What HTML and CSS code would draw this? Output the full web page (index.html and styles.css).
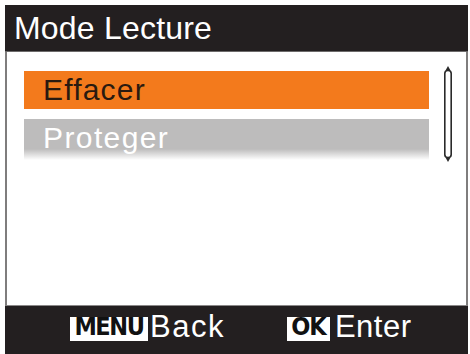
FILE: index.html
```html
<!DOCTYPE html>
<html lang="fr">
<head>
<meta charset="utf-8">
<title>Mode Lecture</title>
<link rel="stylesheet" href="styles.css">
</head>
<body>
<div class="screen">
  <header class="title-bar">Mode Lecture</header>
  <main class="content">
    <ul class="menu-list">
      <li class="menu-item selected">Effacer</li>
      <li class="menu-item disabled">Proteger</li>
    </ul>
    <div class="scrollbar">
      <svg width="10" height="98" viewBox="0 0 10 98">
        <path d="M5 0 L7.5 4.5 L2.5 4.5 Z" fill="#2a2a2a"/>
        <rect x="1.8" y="4.5" width="6.4" height="87" rx="3" ry="3" fill="#fff" stroke="#2a2a2a" stroke-width="1.6"/>
        <path d="M2.5 91.5 L7.5 91.5 L5 96 Z" fill="#2a2a2a"/>
      </svg>
    </div>
  </main>
  <footer class="button-bar">
    <div class="hint">
      <span class="badge badge-menu">MENU</span>
      <span class="hint-label hint-back">Back</span>
    </div>
    <div class="hint">
      <span class="badge badge-ok">OK</span>
      <span class="hint-label hint-enter">Enter</span>
    </div>
  </footer>
</div>
</body>
</html>
```
FILE: styles.css
```css
html, body {
  margin: 0;
  padding: 0;
  background: #ffffff;
}

body {
  font-family: "Liberation Sans", Arial, sans-serif;
  width: 470px;
  height: 354px;
  overflow: hidden;
}

.screen {
  margin: 5px 2px 0 5px;
  height: 349px;
  display: flex;
  flex-direction: column;
  background: #231f20;
}

.title-bar {
  height: 47px;
  box-sizing: border-box;
  padding-left: 9px;
  font-size: 32px;
  line-height: 46px;
  letter-spacing: 0.2px;
  color: #ffffff;
  background: #231f20;
  border-bottom: 1px solid #6d6b6b;
}

.content {
  flex: 1;
  display: flex;
  background: #ffffff;
  border-left: 2px solid #7f7d7d;
  border-right: 2px solid #7f7d7d;
  border-bottom: 1px solid #8a8888;
}

.menu-list {
  list-style: none;
  margin: 0;
  padding: 19px 0 0 17px;
  flex: 1;
  display: flex;
  flex-direction: column;
  gap: 10px;
}

.menu-item {
  height: 38px;
  padding-left: 19px;
  font-size: 30px;
  line-height: 38px;
  letter-spacing: 1.2px;
}

.menu-item.selected {
  background: #f37a1c;
  color: #2a1a10;
}

.menu-item.disabled {
  height: 41px;
  background: linear-gradient(to bottom, #bdbcbc 0, #bdbcbc 30px, #ffffff 41px);
  color: #ffffff;
  letter-spacing: 1.4px;
}

.scrollbar {
  width: 10px;
  padding: 14px 13px 0 14px;
}

.scrollbar svg {
  display: block;
}

.button-bar {
  height: 48px;
  display: flex;
  align-items: flex-start;
  padding-left: 65px;
  gap: 62px;
  background: #231f20;
}

.hint {
  display: flex;
  align-items: flex-start;
}

.badge {
  margin-top: 11px;
  height: 24px;
  box-sizing: border-box;
  background: #ffffff;
  color: #111111;
  font-family: "DejaVu Sans Condensed", "DejaVu Sans", sans-serif;
  font-weight: bold;
  font-size: 25px;
  line-height: 20px;
  text-align: center;
}

.badge-menu {
  width: 78px;
  letter-spacing: -1.4px;
  margin-right: 2px;
}

.badge-ok {
  width: 43px;
  letter-spacing: -1px;
  margin-right: 5px;
}

.hint-label {
  color: #ffffff;
  font-size: 31px;
  line-height: 42px;
}

.hint-back {
  letter-spacing: 1.5px;
}

.hint-enter {
  letter-spacing: 0.5px;
}
```
